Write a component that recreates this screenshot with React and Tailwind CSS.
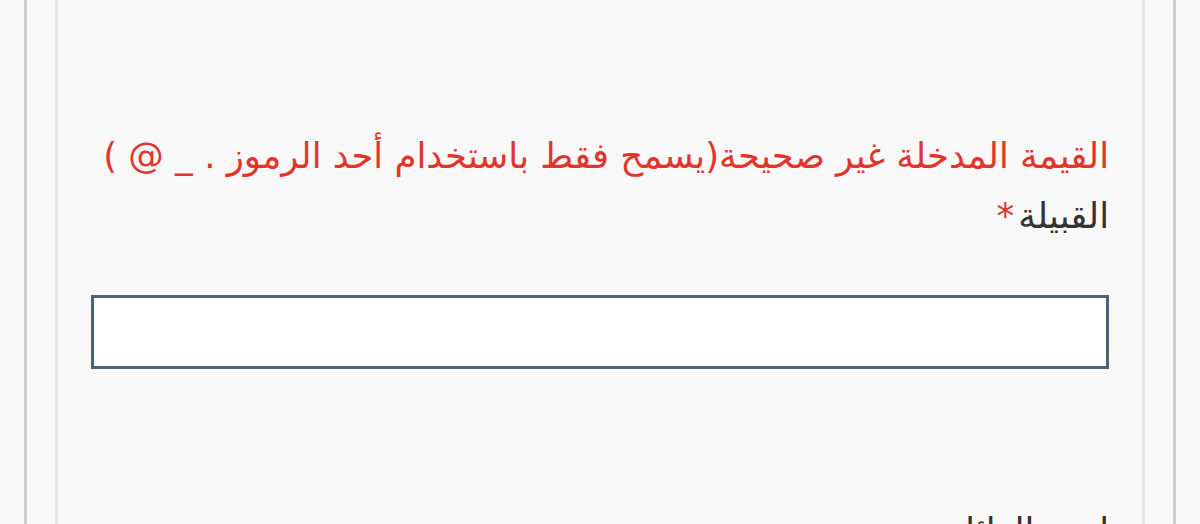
export default function App() {
  return (
    <div
      dir="rtl"
      className="h-[524px] overflow-hidden bg-[#f8f8f8]"
      style={{ fontFamily: '"DejaVu Sans", "Noto Sans", sans-serif' }}
    >
      <div className="mx-[24px] h-full border-x-[3px] border-[#d0d0d0] px-[28px]">
        <div className="h-full border-x-[3px] border-[#e6e6e6] px-[33px] pt-[130px]">
          {/* error message */}
          <p className="whitespace-nowrap text-[35.5px] leading-[52px] text-[#e3342b]">
            القيمة المدخلة غير صحيحة(يسمح فقط باستخدام أحد الرموز . _ @ )
          </p>

          {/* field */}
          <label className="mt-[8px] block text-[35.5px] leading-[52px] text-[#333333]">
            القبيلة<span className="mr-1 text-[#e3342b]">*</span>
          </label>
          <input
            type="text"
            className="mt-[53px] block h-[74px] w-full border-[3px] border-[#4a6377] bg-white outline-none"
          />

          <label className="mt-[136px] block text-[35.5px] leading-[52px] text-[#333333]">
            اسم العائلة
          </label>
        </div>
      </div>
    </div>
  )
}
